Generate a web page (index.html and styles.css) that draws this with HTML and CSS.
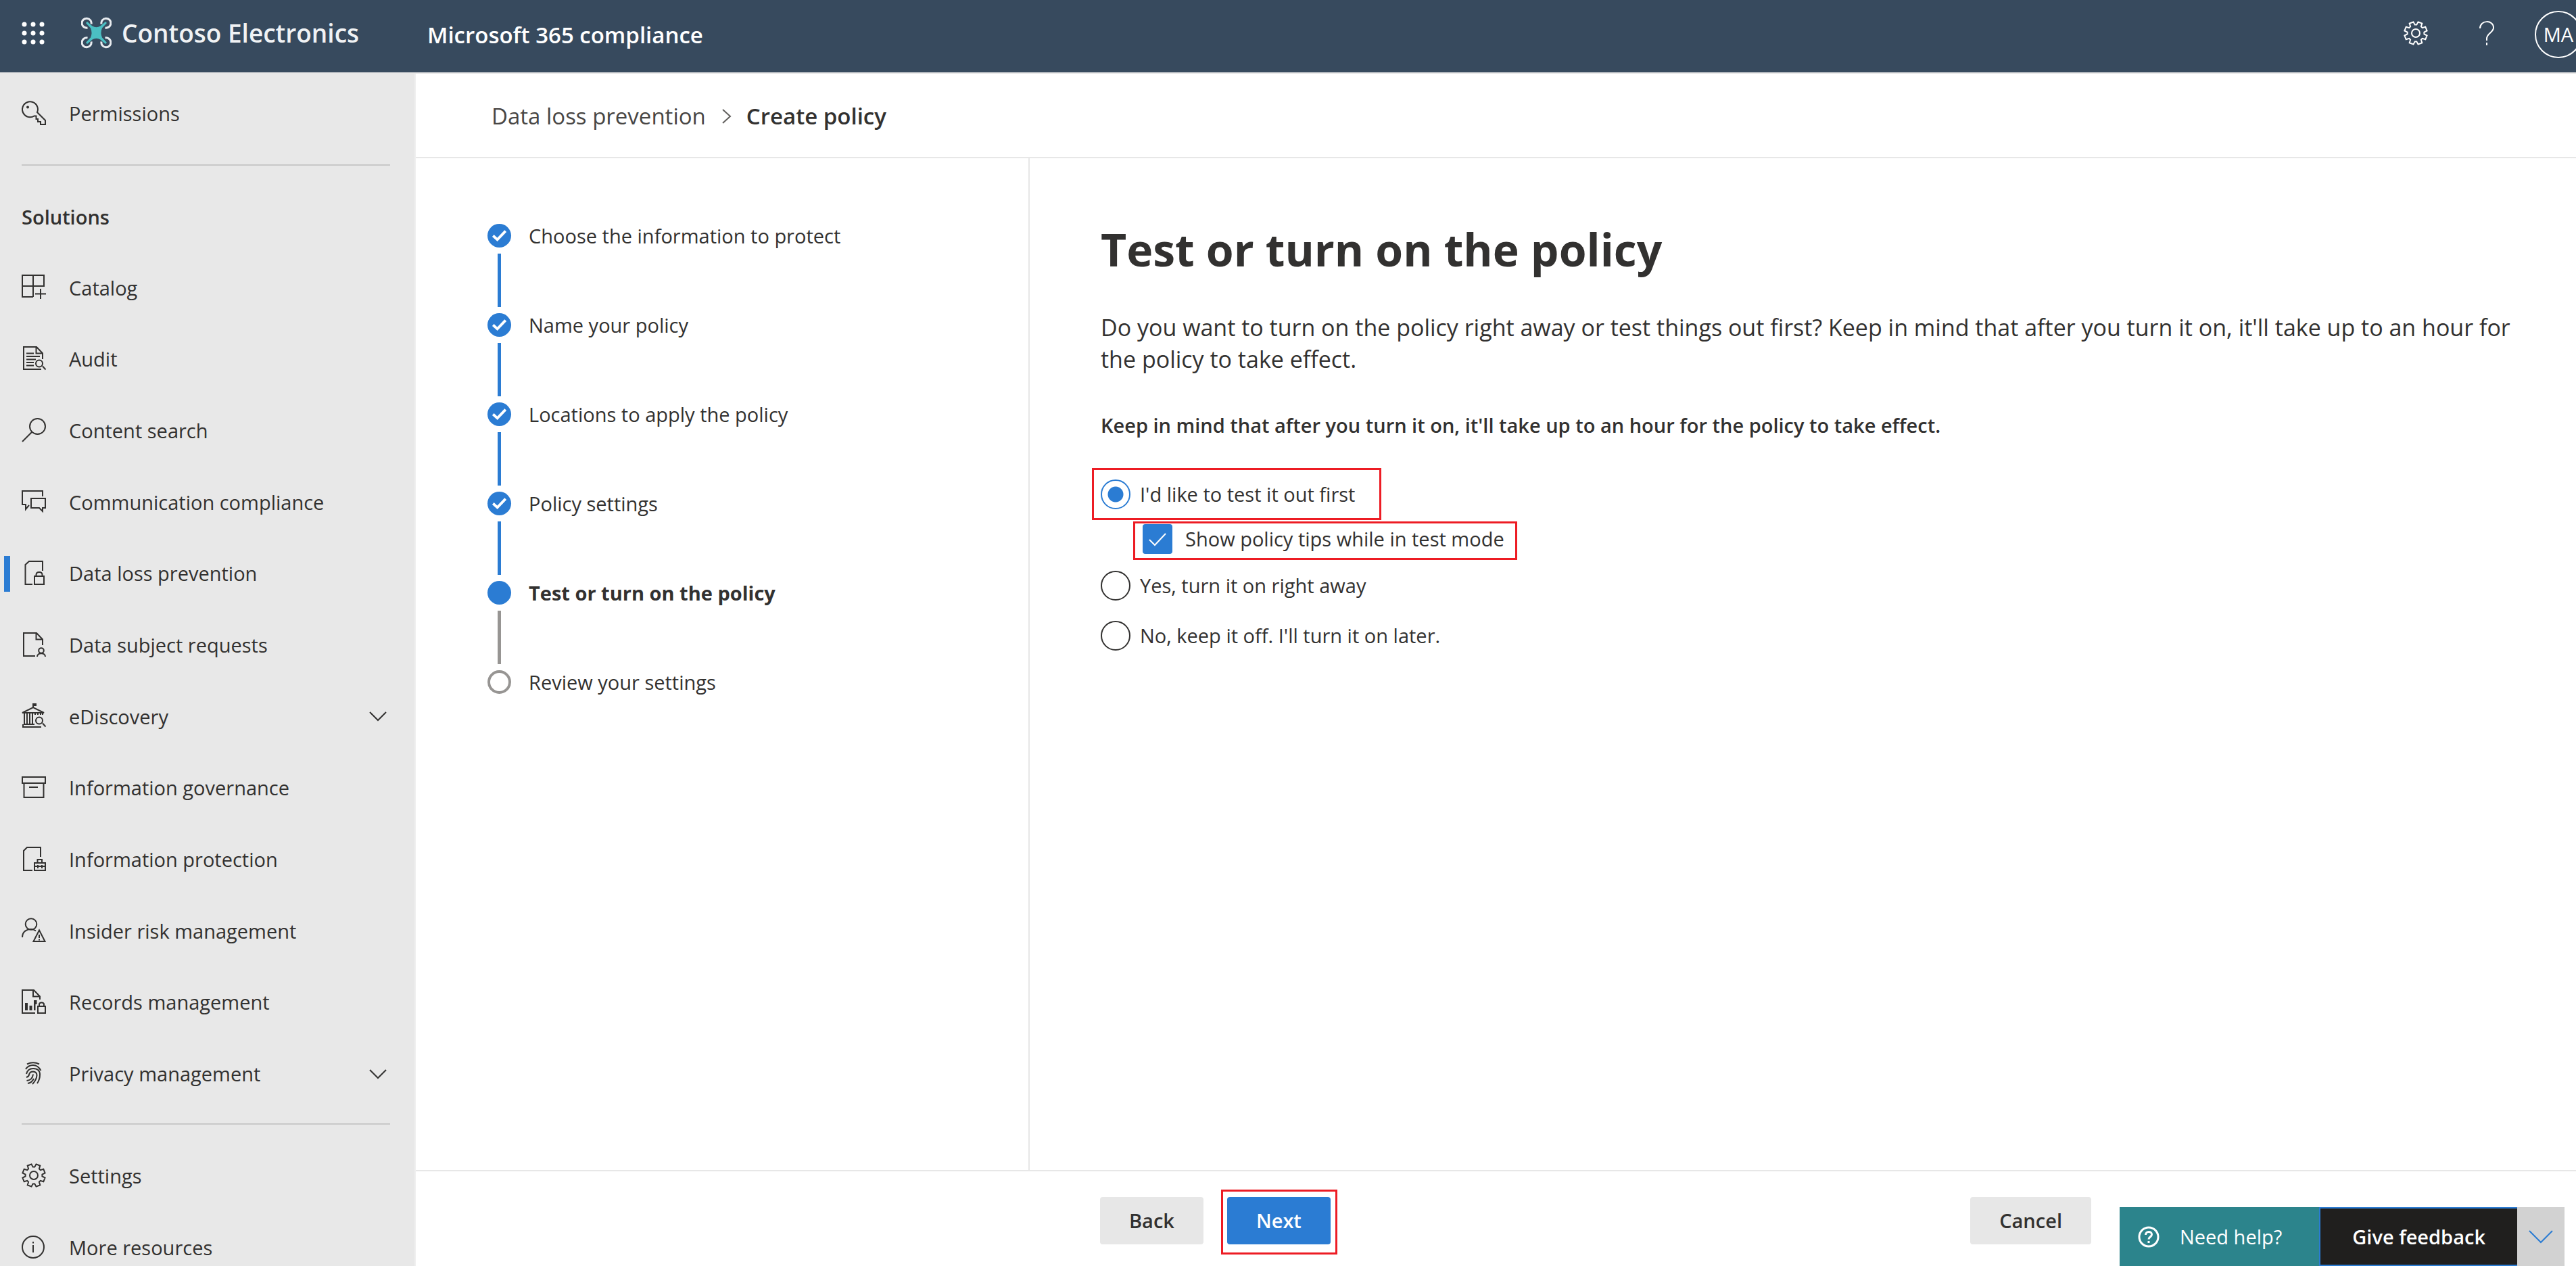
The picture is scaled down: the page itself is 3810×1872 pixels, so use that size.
FILE: index.html
```html
<!DOCTYPE html>
<html lang="en">
<head>
<meta charset="utf-8">
<title>Create policy - Microsoft 365 compliance</title>
<meta name="viewport" content="width=device-width, initial-scale=1">
<link rel="stylesheet" href="styles.css">
</head>
<body>
<svg class="sprite" aria-hidden="true">
  <symbol id="i-gear" viewBox="0 0 36 36"><path d="M16.7 5.6H19.3L21.5 1.4L27.3 3.7L25.9 8.3L27.7 10.1L32.3 8.7L34.6 14.5L30.4 16.7V19.3L34.6 21.5L32.3 27.3L27.7 25.9L25.9 27.7L27.3 32.3L21.5 34.6L19.3 30.4H16.7L14.5 34.6L8.7 32.3L10.1 27.7L8.3 25.9L3.7 27.3L1.4 21.5L5.6 19.3V16.7L1.4 14.5L3.7 8.7L8.3 10.1L10.1 8.3L8.7 3.7L14.5 1.4Z"/><circle cx="18" cy="18" r="6"/></symbol>
  <symbol id="i-chevron" viewBox="0 0 26 15"><path d="M1 1L13 13L25 1"/></symbol>
  <symbol id="i-key" viewBox="0 0 36 36"><path d="M21.5 22.5H18.5C17 23.5 15 24.2 12.5 24.2A11.5 11.5 0 1 1 23.5 9.5C24.2 12 24 15 23 17L35 29V35H28V31H24V27H21.5Z"/><circle class="dot" cx="9" cy="9.5" r="2"/></symbol>
  <symbol id="i-catalog" viewBox="0 0 36 36"><path d="M1 1H33V17H1ZM17 1V33M1 17V33H17M28 21V36M20 28.5H36"/></symbol>
  <symbol id="i-audit" viewBox="0 0 36 36"><path d="M31 19V10.5L22 1H3V34H29M21.5 1V10.5H31M7 10.5H18M7 15H27M7 19.5H21M7 24H18M7 28.5H18M31 29.5L35.5 34.5"/><circle cx="26" cy="25.5" r="5"/></symbol>
  <symbol id="i-search" viewBox="0 0 36 36"><circle cx="23.500" cy="12.5" r="11.5"/><path d="M15.5 20.5L1 35"/></symbol>
  <symbol id="i-chat" viewBox="0 0 36 36"><path d="M31 11V3H1V23H6V30L11 24M14 14H35V28H31V33L26 28H14Z"/></symbol>
  <symbol id="i-doclock" viewBox="0 0 36 36"><path d="M31 15V1H11L5.5 6V35H16M19 23H33V35H19ZM21.5 23V21Q21.5 17 26 17T30.5 21V23"/></symbol>
  <symbol id="i-docperson" viewBox="0 0 36 36"><path d="M31 19V10.5L22 1H3V35H20M21.5 1V10.5H31M23 36C23 29.5 35 29.5 35 36"/><circle cx="29" cy="27" r="3.8"/></symbol>
  <symbol id="i-ediscovery" viewBox="0 0 36 36"><path d="M1 14L17 6L33 14ZM17 6V1H21V3H17M4 14V31M8 14V30M12 14V30M16 14V30M3 31H19M2 31V35H29M20 17V14M24 17V14M28 17V14M31 17V14M31 29.5L35.5 34.5"/><circle cx="26" cy="25.5" r="5"/></symbol>
  <symbol id="i-archive" viewBox="0 0 36 36"><path d="M1 3H35V12H1ZM3.5 12V33H32.5V12M11 18H24"/></symbol>
  <symbol id="i-docbox" viewBox="0 0 36 36"><path d="M28 15V1H8L3 6V35H16M19 24H35V35H19ZM23.5 24V19H30V24M19 29H35M24 27V32M30 27V32"/></symbol>
  <symbol id="i-risk" viewBox="0 0 36 36"><circle cx="14" cy="9.5" r="8.3"/><path d="M1 29C1 20 8 17 14 17C17 17 19 18 21 19.5M26 18.5L34.5 35H17.5ZM26 25V30M26 31.5V33.5"/></symbol>
  <symbol id="i-records" viewBox="0 0 36 36"><path d="M27 15V10.5L18 1H1V35H20M17 1V10.5H27M24 25H35V35H24ZM26 25V22Q26 19.5 29.5 19.5T33 22V25"/><path class="solid" d="M5 20H9V31H5ZM11.5 24H15.5V31H11.5ZM18 16H22.5V22H20.5V31H18Z"/></symbol>
  <symbol id="i-finger" viewBox="0 0 36 36"><path d="M8 4.500Q17 0 26 4.500M6 12Q10 6 17 6T28.500 14M7 19Q9 11 17 11Q27 11 27 20Q27 27 23 33M7 24Q10.500 23 11 20Q12 15.500 17 15.500Q22.500 16 22.500 21Q22 28 16 34M7.500 29Q16 28 17 19.500M9 33Q15 32 18 26"/></symbol>
  <symbol id="i-info" viewBox="0 0 36 36"><circle cx="17" cy="18" r="16"/><path d="M17 15V26M17 10V12.5"/></symbol>
  <symbol id="i-tick" viewBox="0 0 36 36"><path d="M8.5 18L15 24L27.5 11"/></symbol>
</svg>

<header class="topbar">
  <button class="icon-btn" type="button" aria-label="App launcher">
    <svg class="waffle" viewBox="0 0 34 34"><circle cx="4" cy="4" r="3.5"/><circle cx="17" cy="4" r="3.5"/><circle cx="30" cy="4" r="3.5"/><circle cx="4" cy="17" r="3.5"/><circle cx="17" cy="17" r="3.5"/><circle cx="30" cy="17" r="3.5"/><circle cx="4" cy="30" r="3.5"/><circle cx="17" cy="30" r="3.5"/><circle cx="30" cy="30" r="3.5"/></svg>
  </button>
  <a class="brand" href="#">
    <svg class="logo" viewBox="0 0 45 47" aria-hidden="true"><path class="logo-ring" d="M15 10.5A7 7 0 1 0 9.5 16M30 10.5A7 7 0 1 1 35.5 16M15 36.5A7 7 0 1 1 9.5 31M30 36.5A7 7 0 1 0 35.5 31"/><path class="logo-x" d="M9 7L16.5 13.5Q22.5 17 28.5 13.5L36 7L38 9L31 16.5Q28 23.5 31 30.5L38 38L36 40L28.5 33.5Q22.5 30 16.5 33.5L9 40L7 38L14 30.5Q17 23.5 14 16.5L7 9Z"/></svg>
    <span class="brand-name">Contoso Electronics</span>
  </a>
  <span class="product">Microsoft 365 compliance</span>
  <div class="tools">
    <button class="icon-btn" type="button" aria-label="Settings"><svg class="icon"><use href="#i-gear"/></svg></button>
    <button class="icon-btn help" type="button" aria-label="Help"><svg class="icon" viewBox="0 0 36 36"><path d="M8 11C8 -2 28 -2 28 10C28 17 18 18 18 26V29M18 32V36"/></svg></button>
    <button class="avatar" type="button">MA</button>
  </div>
</header>

<div class="shell">
  <nav class="sidebar">
    <a class="nav-item" href="#"><svg class="icon"><use href="#i-key"/></svg><span>Permissions</span></a>
    <hr>
    <h2 class="nav-title">Solutions</h2>
    <div class="nav-list">
      <a class="nav-item" href="#"><svg class="icon"><use href="#i-catalog"/></svg><span>Catalog</span></a>
      <a class="nav-item" href="#"><svg class="icon"><use href="#i-audit"/></svg><span>Audit</span></a>
      <a class="nav-item" href="#"><svg class="icon"><use href="#i-search"/></svg><span>Content search</span></a>
      <a class="nav-item" href="#"><svg class="icon"><use href="#i-chat"/></svg><span>Communication compliance</span></a>
      <a class="nav-item active" href="#" aria-current="page"><svg class="icon"><use href="#i-doclock"/></svg><span>Data loss prevention</span></a>
      <a class="nav-item" href="#"><svg class="icon"><use href="#i-docperson"/></svg><span>Data subject requests</span></a>
      <a class="nav-item" href="#"><svg class="icon"><use href="#i-ediscovery"/></svg><span>eDiscovery</span><svg class="chevron"><use href="#i-chevron"/></svg></a>
      <a class="nav-item" href="#"><svg class="icon"><use href="#i-archive"/></svg><span>Information governance</span></a>
      <a class="nav-item" href="#"><svg class="icon"><use href="#i-docbox"/></svg><span>Information protection</span></a>
      <a class="nav-item" href="#"><svg class="icon"><use href="#i-risk"/></svg><span>Insider risk management</span></a>
      <a class="nav-item" href="#"><svg class="icon"><use href="#i-records"/></svg><span>Records management</span></a>
      <a class="nav-item" href="#"><svg class="icon"><use href="#i-finger"/></svg><span>Privacy management</span><svg class="chevron"><use href="#i-chevron"/></svg></a>
    </div>
    <hr>
    <div class="nav-foot">
      <a class="nav-item" href="#"><svg class="icon"><use href="#i-gear"/></svg><span>Settings</span></a>
      <a class="nav-item" href="#"><svg class="icon"><use href="#i-info"/></svg><span>More resources</span></a>
    </div>
  </nav>

  <div class="page">
    <nav class="crumbs" aria-label="Breadcrumb">
      <a href="#">Data loss prevention</a>
      <svg class="crumb-sep" viewBox="0 0 14 22" aria-hidden="true"><path d="M1 1L12 11L1 21"/></svg>
      <span class="current">Create policy</span>
    </nav>
    <div class="wizard">
      <ol class="steps">
        <li class="step done"><svg class="bullet"><use href="#i-tick"/></svg><span>Choose the information to protect</span></li>
        <li class="step done"><svg class="bullet"><use href="#i-tick"/></svg><span>Name your policy</span></li>
        <li class="step done"><svg class="bullet"><use href="#i-tick"/></svg><span>Locations to apply the policy</span></li>
        <li class="step done"><svg class="bullet"><use href="#i-tick"/></svg><span>Policy settings</span></li>
        <li class="step now" aria-current="step"><svg class="bullet"></svg><span>Test or turn on the policy</span></li>
        <li class="step"><svg class="bullet"></svg><span>Review your settings</span></li>
      </ol>
      <main class="content">
        <h1>Test or turn on the policy</h1>
        <p class="lead">Do you want to turn on the policy right away or test things out first? Keep in mind that after you turn it on, it'll take up to an hour for the policy to take effect.</p>
        <p class="note" id="note">Keep in mind that after you turn it on, it'll take up to an hour for the policy to take effect.</p>
        <form class="options" aria-labelledby="note">
          <label class="option marked"><input type="radio" name="mode" checked><span>I'd like to test it out first</span></label>
          <label class="option marked sub"><input type="checkbox" checked><span>Show policy tips while in test mode</span></label>
          <label class="option"><input type="radio" name="mode"><span>Yes, turn it on right away</span></label>
          <label class="option"><input type="radio" name="mode"><span>No, keep it off. I'll turn it on later.</span></label>
        </form>
      </main>
    </div>
    <footer class="actions">
      <button class="btn" type="button">Back</button>
      <div class="next-mark"><button class="btn primary" type="button">Next</button></div>
      <button class="btn cancel" type="button">Cancel</button>
    </footer>
  </div>
</div>

<div class="dock">
  <button class="dock-help" type="button"><svg class="dock-icon" viewBox="0 0 32 32" aria-hidden="true"><circle cx="16" cy="16" r="14"/><path d="M11.5 13C11.5 7 20.5 7 20.5 12.5C20.5 16 16 16 16 19.5M16 22V25"/></svg><span>Need help?</span></button>
  <button class="dock-feedback" type="button">Give feedback</button>
  <button class="dock-toggle" type="button" aria-label="Collapse"><svg viewBox="0 0 36 20"><path d="M1 1L18 18L35 1"/></svg></button>
</div>
</body>
</html>
```
FILE: styles.css
```css
* { box-sizing: border-box; }

body {
  margin: 0;
  height: 100vh;
  display: flex;
  flex-direction: column;
  overflow: hidden;
  font-family: "Open Sans", "Noto Sans", sans-serif;
  font-size: 29px;
  line-height: 40px;
  color: #323130;
  background: #fff;
}

a { color: inherit; text-decoration: none; }
button { font: inherit; color: inherit; border: 0; background: none; padding: 0; }
svg { fill: none; stroke: currentColor; stroke-width: 2; flex: none; display: block; }
.sprite { position: absolute; width: 0; height: 0; }
.icon { width: 36px; height: 36px; overflow: visible; }
.dot, .solid { fill: currentColor; stroke: none; }

/* top bar */
.topbar {
  flex: none;
  display: flex;
  align-items: center;
  height: 109px;
  padding: 0 0 10px 32px;
  overflow: hidden;
  color: #fff;
  background: #374a5e;
  border-bottom: 2px solid #e7e7e7;
}
.waffle { width: 34px; height: 34px; fill: #fff; stroke: none; }
.brand { display: flex; align-items: center; gap: 15px; margin-left: 54px; }
.logo { width: 45px; height: 47px; }
.logo-ring { stroke: #e8ecf0; stroke-width: 3; }
.logo-x { fill: #4bbfc3; stroke: none; }
.brand-name { font-size: 37px; font-weight: 600; color: #f0f2f4; }
.product { margin: 6px 0 0 101px; font-size: 33px; font-weight: 600; }
.tools { display: flex; align-items: center; margin-left: auto; }
.help { margin: 0 53px 0 69px; }
.avatar {
  width: 70px;
  height: 70px;
  margin: 4px -9px 0 0;
  border: 2px solid #fff;
  border-radius: 50%;
}

/* left navigation */
.shell { flex: 1; display: flex; min-height: 0; }
.sidebar {
  flex: none;
  width: 615px;
  padding-top: 6px;
  overflow: hidden;
  background: #e8e8e8;
  border-right: 2px solid #efefef;
}
.sidebar hr { height: 2px; margin: 22px 36px 0 32px; border: 0; background: #c8c8c8; }
.sidebar .nav-list + hr { margin-top: 20px; }
.nav-foot { margin-top: 23px; }
.nav-item { display: flex; align-items: center; height: 106px; padding: 0 41px 0 6px; }
.nav-item::before { content: ""; width: 9px; height: 53px; margin-right: 17px; }
.nav-item.active::before { background: #2b7cd3; }
.nav-item .icon { margin-bottom: 3px; }
.nav-item span { margin-left: 34px; }
.nav-title { margin: 56px 0 32px 32px; font-size: 29px; font-weight: 600; line-height: 40px; }
.nav-list { display: grid; grid-auto-rows: 1fr; height: 1268px; }
.nav-list .nav-item { height: auto; }
.chevron { width: 26px; height: 15px; margin-left: auto; }

/* page */
.page { flex: 1; min-width: 0; display: flex; flex-direction: column; }
.crumbs {
  flex: none;
  display: flex;
  align-items: center;
  height: 125px;
  padding: 2px 0 0 112px;
  font-size: 33px;
  color: #484644;
  border-bottom: 2px solid #e7e7e7;
}
.crumb-sep { width: 14px; height: 22px; margin: 0 22px 0 24px; stroke: #605e5c; }
.current { font-weight: 600; color: #323130; }
.wizard { flex: 1; display: flex; min-height: 0; }

.steps {
  flex: none;
  width: 908px;
  margin: 0;
  padding: 97px 0 0 106px;
  list-style: none;
  border-right: 2px solid #e7e7e7;
}
.step { display: grid; grid-template-columns: 35px 1fr; column-gap: 26px; align-items: center; }
.step:not(:last-child)::after {
  content: "";
  justify-self: center;
  width: 5px;
  height: 79px;
  margin: 9px 0;
  background: #2b7cd3;
}
.step span { line-height: 35px; }
.bullet { width: 35px; height: 35px; border: 4px solid #979593; border-radius: 50%; }
.done .bullet, .now .bullet { color: #fff; stroke-width: 4; background: #2b7cd3; border: 0; }
.step.now { font-weight: 700; }
.step.now::after { background: #979593; }

.content { flex: 1; min-width: 0; padding: 88px 80px 0 105px; }
h1 { margin: 0; font-size: 66px; font-weight: 700; line-height: 92px; }
.lead { margin: 47px 0 0; font-size: 34px; line-height: 47px; }
.note { margin: 54px 0 0; font-weight: 600; }
.options { display: flex; flex-direction: column; align-items: flex-start; margin-top: 43px; }
.option { display: flex; align-items: center; gap: 14px; margin-top: 30px; }
.option.marked { margin: 0 0 0 -13px; padding: 14px 36px 13px 10px; border: 3px solid #ed1c24; }
.option.sub { gap: 19px; margin: 2px 0 0 48px; padding: 1px 16px 6px 11px; }
.sub + .option { margin-top: 16px; }
.option input { appearance: none; flex: none; width: 44px; height: 44px; margin: 0; border: 2px solid #323130; }
.option input[type="radio"] { border-radius: 50%; }
.option input[type="radio"]:checked {
  border-color: #2b7cd3;
  background: radial-gradient(circle, #2b7cd3 11px, transparent 12px);
}
.option input[type="checkbox"] {
  border: 0;
  border-radius: 4px;
  background: #2b7cd3 url("data:image/svg+xml,%3Csvg xmlns='http://www.w3.org/2000/svg' viewBox='0 0 44 44' fill='none' stroke='%23fff' stroke-width='2'%3E%3Cpath d='M10 23L18 31L34 14'/%3E%3C/svg%3E");
}

.actions {
  flex: none;
  display: flex;
  align-items: flex-start;
  height: 142px;
  padding: 38px 717px 0 1012px;
  border-top: 2px solid #e7e7e7;
}
.btn {
  height: 70px;
  padding: 0 43px;
  font-weight: 600;
  background: #e7e7e7;
  border-radius: 4px;
}
.btn.primary { color: #fff; background: #2b7cd3; }
.next-mark { margin: -11px 0 0 26px; padding: 8px 7px 12px 6px; border: 3px solid #ed1c24; }
.cancel { margin-left: auto; }

/* help and feedback, over the page's bottom right corner */
.dock {
  position: absolute;
  right: 17px;
  bottom: 0;
  display: flex;
  height: 87px;
}
.dock-help {
  display: flex;
  align-items: center;
  gap: 30px;
  padding: 0 55px 0 27px;
  color: #fff;
  background: #2c848c;
}
.dock-icon { width: 32px; height: 32px; stroke-width: 3; }
.dock-feedback { padding: 0 47px; font-weight: 600; color: #fff; background: #201f1e; border: 2px solid #2b7cd3; border-right: 0; }
.dock-toggle { padding: 0 17px; color: #2b7cd3; background: #d2d2d2; }
.dock-toggle svg { width: 36px; height: 20px; }
```
